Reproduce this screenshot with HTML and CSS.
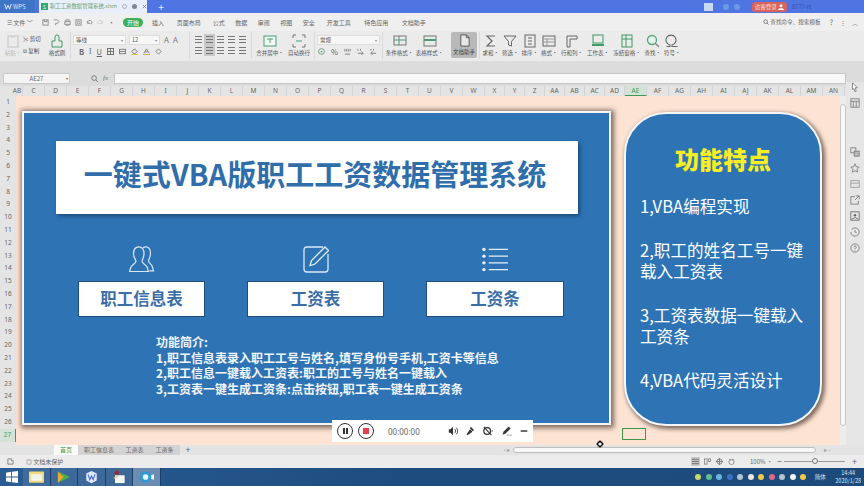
FILE: index.html
```html
<!DOCTYPE html>
<html lang="zh-CN">
<head>
<meta charset="utf-8">
<title>WPS</title>
<link rel="stylesheet" href="styles.css">
</head>
<body>
<div class="app">
  <header class="titlebar">
    <div class="wps-tab"><svg class="wps-logo" viewBox="0 0 12 10"><path d="M1 1l2.500 8L6 3l2.500 6L11 1" fill="none" stroke="#dfe8fa" stroke-width="1.500"/></svg>WPS</div>
    <div class="doc-tab"><span class="doc-icon">S</span><span class="doc-name">职工工资数据管理系统.xlsm</span><span class="doc-x"><i class="dx-a"></i><i class="dx-b"></i><svg viewBox="0 0 6 6"><path d="M1 1l4 4M5 1L1 5" stroke="#7b8798"/></svg></span></div>
    <div class="new-tab">+</div>
    <div class="title-right">
      <span class="t-box"></span><span class="t-dot"></span><span class="t-dot"></span>
      <span class="login">访客登录 <svg viewBox="0 0 8 8" class="login-i"><circle cx="4" cy="2.300" r="2" fill="#fff"/><path d="M0 8c0-3 8-3 8 0z" fill="#fff"/></svg></span>
      <span class="user">877?-rc</span>
    </div>
  </header>

  <nav class="menubar">
    <span class="m-file">☰ 文件 ﹀</span>
    <span class="m-quick">
      <svg viewBox="0 0 8 8"><rect x="1" y="1" width="6" height="6" fill="none" stroke="#888"/><path d="M2.500 1v2h3V1" fill="none" stroke="#888"/></svg>
      <svg viewBox="0 0 8 8"><path d="M1 1h4l2 2-2 2H3v2" fill="none" stroke="#888"/></svg>
      <svg viewBox="0 0 8 8"><rect x="1" y="3" width="6" height="3" fill="none" stroke="#888"/><path d="M2 3V1h4v2M2 6v1h4V6" fill="none" stroke="#888"/></svg>
      <svg viewBox="0 0 8 8"><rect x="1" y="1" width="6" height="6" fill="none" stroke="#888"/><circle cx="4" cy="4" r="1.500" fill="none" stroke="#888"/></svg>
      <svg viewBox="0 0 8 8"><path d="M2 5a2.500 2.500 0 114 1M2 2v3h3" fill="none" stroke="#888"/></svg>
      <svg viewBox="0 0 8 8"><path d="M6 5a2.500 2.500 0 10-4 1M6 2v3H3" fill="none" stroke="#ccc"/></svg>
      <svg viewBox="0 0 8 8"><circle cx="4" cy="4" r="1" fill="#888"/></svg>
    </span>
    <span class="m-start">开始</span>
    <span class="m-i w1">插入</span><span class="m-i w2">页面布局</span><span class="m-i w3">公式</span><span class="m-i w3">数据</span><span class="m-i w3">审阅</span><span class="m-i w3">视图</span><span class="m-i w3">安全</span><span class="m-i w2">开发工具</span><span class="m-i w2">特色应用</span><span class="m-i w2">文档助手</span>
    <span class="m-search">
      <svg viewBox="0 0 8 8"><circle cx="3.500" cy="3.500" r="2.500" fill="none" stroke="#666"/><path d="M5.500 5.500L7.500 7.500" stroke="#666"/></svg>
      <span class="ms-text">查找命令、搜索模板</span><span class="ms-q">?</span><span class="ms-d">⋮</span><span class="ms-u">︿</span>
    </span>
  </nav>

  <section class="ribbon">
    <div class="r-big paste w-a"><svg viewBox="0 0 14 14"><rect x="2" y="2" width="10" height="11" fill="none" stroke="#c4c4c4"/><rect x="5" y="1" width="4" height="3" fill="#d8d8d8"/></svg><span class="muted">粘贴·</span></div>
    <div class="r-two w-b"><span>✂ 剪切</span><span>⧉ 复制</span></div>
    <div class="r-big w-c"><svg viewBox="0 0 14 14"><path d="M5 7V3a2 2 0 014 0v4h3v6H2V7z" fill="none" stroke="#3f9a68"/></svg><span>格式刷</span></div>
    <i class="sep s0"></i>
    <div class="r-font">
      <div class="row"><span class="box f1">等线<b>▾</b></span><span class="box f2">12<b>▾</b></span><span class="ag">A</span><span class="ag">A</span></div>
      <div class="row tools"><b>B</b><em>I</em><u>U</u>
        <svg viewBox="0 0 8 8"><rect x=".5" y=".5" width="7" height="7" fill="none" stroke="#666"/><path d="M4 0v8M0 4h8" stroke="#666"/></svg>
        <svg viewBox="0 0 8 8"><rect x=".5" y="1.500" width="7" height="5" fill="none" stroke="#777"/><path d="M.5 4h7" stroke="#777"/></svg>
        <svg viewBox="0 0 8 8"><path d="M4 1l3 3-3 3-3-3z" fill="none" stroke="#666"/><path d="M0 7.500h8" stroke="#d6c12b"/></svg>
        <svg viewBox="0 0 8 8"><path d="M1 6l3-5 3 5M2.500 4.500h3" fill="none" stroke="#777"/><path d="M0 7.500h8" stroke="#c8a81e"/></svg>
        <svg viewBox="0 0 8 8"><path d="M4 1l3 3-3 3-3-3z" fill="none" stroke="#777"/></svg>
      </div>
    </div>
    <i class="sep s1"></i>
    <div class="r-align">
      <span><i class="ln"></i></span><span class="on"><i class="ln"></i></span><span><i class="ln"></i></span><span><i class="ln"></i></span><span><i class="ln"></i></span>
      <span><i class="ln"></i></span><span class="on"><i class="ln"></i></span><span><i class="ln"></i></span><span><i class="ln"></i></span><span><i class="ln"></i></span>
    </div>
    <i class="sep s2"></i>
    <div class="r-big w-d"><svg viewBox="0 0 14 14"><rect x="1" y="2" width="12" height="10" fill="#f3faf6" stroke="#4b9c72"/><path d="M4 5h6M7 5v4" stroke="#4b9c72"/></svg><span>合并居中·</span></div>
    <div class="r-big w-e"><svg viewBox="0 0 14 14"><path d="M1 4V1h3M10 1h3v3M13 10v3h-3M4 13H1v-3" fill="none" stroke="#777"/><path d="M4 7h6" stroke="#4b9c72"/></svg><span>自动换行</span></div>
    <i class="sep s3"></i>
    <div class="r-num">
      <div class="row"><span class="box f3">常规<b>▾</b></span></div>
      <div class="row tools num">
        <svg viewBox="0 0 8 8"><circle cx="4" cy="4" r="3.300" fill="none" stroke="#5a9c78"/><circle cx="4" cy="4" r="1" fill="#5a9c78"/></svg>
        <span>%</span>
        <svg viewBox="0 0 8 8"><path d="M1 1v3M3 1v3M5 1v3M7 1v3M1 7h6" stroke="#777"/></svg>
        <svg viewBox="0 0 8 8"><path d="M1 1v2M4 1v2M1 6h6M5 4l2 2-2 2" fill="none" stroke="#777"/></svg>
        <svg viewBox="0 0 8 8"><path d="M1 1v2M4 1v2M7 6H1M3 4L1 6l2 2" fill="none" stroke="#777"/></svg>
      </div>
    </div>
    <i class="sep s4"></i>
    <div class="r-big w-f"><svg viewBox="0 0 14 14"><rect x="1" y="2" width="12" height="9" fill="none" stroke="#777"/><path d="M1 6h12M6 2v9" stroke="#4b9c72"/></svg><span>条件格式·</span></div>
    <div class="r-big w-g"><svg viewBox="0 0 14 14"><rect x="1" y="2" width="12" height="10" fill="none" stroke="#777"/><path d="M1 6h12" stroke="#4b9c72" stroke-width="2"/></svg><span>表格样式·</span></div>
    <div class="r-big helper"><svg viewBox="0 0 14 14"><path d="M3 1h6l3 3v9H3z" fill="#e8e8e8" stroke="#555"/><path d="M9 1v3h3" fill="none" stroke="#555"/></svg><span>文档助手</span></div>
    <i class="sep s5"></i>
    <div class="r-big w-h"><svg viewBox="0 0 14 14"><path d="M11 2H3l5 5-5 5h8" fill="none" stroke="#666" stroke-width="1.200"/></svg><span>求和·</span></div>
    <div class="r-big w-h"><svg viewBox="0 0 14 14"><path d="M1 2h12L8.500 7.500V12l-3-1V7.500z" fill="none" stroke="#666"/></svg><span>筛选·</span></div>
    <div class="r-big w-h"><svg viewBox="0 0 14 14"><rect x="2" y="1" width="10" height="12" fill="none" stroke="#666"/><path d="M5 4h4M5 7h4M5 10h4" stroke="#666"/></svg><span>排序·</span></div>
    <div class="r-big w-h"><svg viewBox="0 0 14 14"><rect x="1" y="2" width="12" height="10" fill="none" stroke="#666"/><path d="M1 5h12M1 8h12M5 5v7" stroke="#999"/></svg><span>格式·</span></div>
    <div class="r-big w-i"><svg viewBox="0 0 14 14"><path d="M2 13V2h10v3H5v8z" fill="none" stroke="#666"/></svg><span>行和列·</span></div>
    <div class="r-big w-i"><svg viewBox="0 0 14 14"><rect x="2" y="1" width="10" height="8" fill="none" stroke="#3f9a68"/><path d="M1 11h12" stroke="#3f9a68" stroke-width="2"/></svg><span>工作表·</span></div>
    <div class="r-big w-j"><svg viewBox="0 0 14 14"><rect x="2" y="1" width="10" height="12" fill="none" stroke="#3f9a68"/><path d="M2 5h10M6 1v12" stroke="#3f9a68"/></svg><span>冻结窗格·</span></div>
    <div class="r-big w-h"><svg viewBox="0 0 14 14"><circle cx="6" cy="6" r="4.500" fill="#e6f3ec" stroke="#56a57d" stroke-width="1.300"/><path d="M9 9l4 4" stroke="#888" stroke-width="1.500"/></svg><span>查找·</span></div>
    <div class="r-big w-h"><svg viewBox="0 0 14 14"><path d="M1.500 12.500h3.500v-1.500A5 5 0 117 11v1.500h5.500" fill="none" stroke="#666" stroke-width="1.100"/></svg><span>符号·</span></div>
  </section>

  <section class="formula">
    <span class="namebox">AE27<b>▾</b></span>
    <span class="fx"><svg viewBox="0 0 8 8"><circle cx="3.500" cy="3.500" r="2.700" fill="none" stroke="#777"/><path d="M5.500 5.500L8 8" stroke="#777"/></svg><em>fx</em></span>
    <span class="input"></span>
  </section>

  <div class="columns">
    <span class="col c0">AB</span><span class="col">C</span><span class="col">D</span><span class="col">E</span><span class="col">F</span><span class="col">G</span><span class="col">H</span><span class="col">I</span><span class="col">J</span><span class="col">K</span><span class="col">L</span><span class="col">M</span><span class="col">N</span><span class="col">O</span><span class="col">P</span><span class="col">Q</span><span class="col">R</span><span class="col">S</span><span class="col">T</span><span class="col">U</span><span class="col">V</span><span class="col">W</span><span class="col n">X</span><span class="col n">Y</span><span class="col n">Z</span><span class="col n">AA</span><span class="col n">AB</span><span class="col n">AC</span><span class="col n">AD</span><span class="col sel">AE</span><span class="col">AF</span><span class="col">AG</span><span class="col">AH</span><span class="col">AI</span><span class="col">AJ</span><span class="col">AK</span><span class="col">AL</span><span class="col">AM</span><span class="col">AN</span>
  </div>

  <main class="work">
    <div class="rows">
      <span>1</span><span>2</span><span>3</span><span>4</span><span>5</span><span>6</span><span>7</span><span>8</span><span>9</span><span>10</span><span>11</span><span>12</span><span>13</span><span>14</span><span>15</span><span>16</span><span>17</span><span>18</span><span>19</span><span>20</span><span>21</span><span>22</span><span>23</span><span>24</span><span>25</span><span>26</span><span class="cur">27</span><span>28</span>
    </div>
    <div class="sheet">
      <div class="panel">
        <h1 class="title">一键式VBA版职工工资数据管理系统</h1>
        <div class="actions">
          <div class="action a1">
            <svg class="ico" viewBox="0 0 26 27"><path d="M9.700.8c3.400 0 5.300 3 5.300 7 0 3.500-1.500 5.500-2 7.500 0 2 3 3 5 5.500l1.500 4.700H.5L2 20.800c2-2.500 5-3.500 5-5.500-.5-2-2.500-4-2.500-7.500 0-4 1.800-7 5.200-7z" fill="none" stroke="#d9e8f7" stroke-width="1.200"/><path d="M14 1.800c.8-.7 1.800-1 2.700-1 3.200 0 4.800 3 4.800 6.500 0 3.500-1.500 5.500-2 7.500 0 1.800 1.800 2.800 3.500 5l1.500 5h-4" fill="none" stroke="#d9e8f7" stroke-width="1.200"/></svg>
            <div class="btn">职工信息表</div>
          </div>
          <div class="action a2">
            <svg class="ico" viewBox="0 0 26 27"><path d="M20 1H4a3 3 0 00-3 3v19a3 3 0 003 3h18a3 3 0 003-3V8" fill="none" stroke="#d9e8f7" stroke-width="1.300"/><path d="M22 1l3.500 3.500L12 18l-5 1.500L8.500 14.500z" fill="none" stroke="#e4eff9" stroke-width="1.300"/></svg>
            <div class="btn">工资表</div>
          </div>
          <div class="action a3">
            <svg class="ico" viewBox="0 0 27 27"><g fill="#e4eff9"><circle cx="2" cy="3" r="1.800"/><circle cx="2" cy="10" r="1.800"/><circle cx="2" cy="17" r="1.800"/><circle cx="2" cy="24" r="1.800"/></g><path d="M7 3h20M7 10h20M7 17h20M7 24h20" stroke="#e4eff9" stroke-width="1.200"/></svg>
            <div class="btn">工资条</div>
          </div>
        </div>
        <div class="intro">
          <p>功能简介:</p>
          <p>1,职工信息表录入职工工号与姓名,填写身份号手机,工资卡等信息</p>
          <p>2,职工信息一键载入工资表:职工的工号与姓名一键载入</p>
          <p>3,工资表一键生成工资条:点击按钮,职工表一键生成工资条</p>
        </div>
      </div>
      <aside class="pill">
        <h2>功能特点</h2>
        <p>1,VBA编程实现</p>
        <p>2,职工的姓名工号一键载入工资表</p>
        <p>3,工资表数据一键载入工资条</p>
        <p>4,VBA代码灵活设计</p>
      </aside>
      <div class="cell"></div>
    </div>
    <div class="vscroll"><span class="thumb"></span></div>
    <div class="side">
      <svg viewBox="0 0 12 12"><path d="M3 1l6 6H6l1.500 4L6 11.500 4.500 8 3 9z" fill="#fff" stroke="#777"/></svg>
      <svg viewBox="0 0 12 12"><rect x="1" y="1" width="10" height="10" fill="none" stroke="#777"/><path d="M1 4h10M4 4v7M7.500 4v7" stroke="#777"/></svg>
      <i class="gap"></i>
      <svg viewBox="0 0 12 12"><rect x="1" y="1" width="6" height="6" fill="none" stroke="#777"/><rect x="5" y="5" width="6" height="6" fill="#bbb" stroke="#777"/></svg>
      <svg viewBox="0 0 12 12"><path d="M6 1l1.500 3.500 3.500.5-2.500 2.500.6 3.500L6 9.300 2.900 11l.6-3.500L1 5l3.500-.5z" fill="none" stroke="#777"/></svg>
      <svg viewBox="0 0 12 12"><rect x="1" y="2" width="10" height="8" fill="none" stroke="#999"/><path d="M1 5h10" stroke="#999"/></svg>
      <svg viewBox="0 0 12 12"><path d="M6 2H1v9h9V7M7 1h4v4M11 1L6 6" fill="none" stroke="#777"/></svg>
      <svg viewBox="0 0 12 12"><rect x="1" y="1" width="10" height="10" fill="none" stroke="#666"/><circle cx="6" cy="5" r="1.500" fill="#666"/><path d="M2 10l3-2h2l3 2" stroke="#666" fill="none"/></svg>
      <svg viewBox="0 0 12 12"><path d="M2 3a5 5 0 11-1 3M6 3.500V6l2 1" fill="none" stroke="#777"/></svg>
      <svg viewBox="0 0 12 12"><circle cx="6" cy="6" r="5" fill="none" stroke="#777"/><path d="M4.500 5a1.500 1.500 0 113 0c0 1-1.500 1-1.500 2.500M6 9v.8" fill="none" stroke="#777"/></svg>
    </div>
    <div class="recorder">
      <span class="rc"><i class="bars"></i></span>
      <span class="rc"><i class="stop"></i></span>
      <span class="time">00:00:00</span>
      <span class="rtools">
        <svg viewBox="0 0 12 12"><path d="M1 4h2l3-3v10L3 8H1z" fill="#333"/><path d="M8 3.500c1.500 1.500 1.500 3.500 0 5M10 2c2 2 2 6 0 8" fill="none" stroke="#333"/></svg>
        <svg viewBox="0 0 12 12"><path d="M7 1l4 4-2 1-3-3zM6 4L2 10l1 1 6-4" fill="#333"/></svg>
        <svg viewBox="0 0 12 12"><circle cx="5" cy="6" r="4" fill="none" stroke="#333" stroke-width="1.500"/><path d="M1 1l9 10" stroke="#333" stroke-width="1.300"/><circle cx="11" cy="6" r=".8" fill="#333"/></svg>
        <svg viewBox="0 0 12 12"><path d="M8 1l2 2-6 6-3 1 1-3zM6 11h6" fill="#333" stroke="#333" stroke-width=".5"/></svg>
        <svg viewBox="0 0 12 12"><path d="M2 6h8" stroke="#222" stroke-width="1.600"/></svg>
      </span>
    </div>
    <svg class="cursor" viewBox="0 0 10 10"><path d="M5 0l1.500 2H8v1.500L10 5 8 6.500V8H6.500L5 10 3.500 8H2V6.500L0 5l2-1.500V2h1.500z" fill="#111"/><circle cx="5" cy="5" r="2" fill="#fff"/></svg>
  </main>

  <div class="tabsbar">
    <span class="tab act">首页</span><span class="tab t2">职工信息表</span><span class="tab t3">工资表</span><span class="tab t3">工资条</span><span class="plus">+</span>
    <span class="hleft">‹ ▸</span>
    <span class="hscroll"></span>
    <span class="hright">▸ ›</span>
  </div>

  <footer class="status">
    <span class="s-a"><svg viewBox="0 0 8 8"><path d="M1 1h4v2h2v4H1z" fill="none" stroke="#777"/></svg></span><span class="s-b">◎ 文档未保护</span>
    <span class="views">
      <svg class="v-on" viewBox="0 0 8 8"><path d="M0 1.500h8M0 4h8M0 6.500h8" stroke="#666"/></svg>
      <svg viewBox="0 0 8 8"><rect x=".5" y="1" width="3" height="6" fill="none" stroke="#888"/><rect x="5" y="1" width="2.500" height="3" fill="none" stroke="#888"/></svg>
      <svg viewBox="0 0 8 8"><circle cx="4" cy="4" r="3" fill="none" stroke="#777"/><path d="M4 0v8M0 4h8" stroke="#777"/></svg>
      <svg viewBox="0 0 8 8"><circle cx="4" cy="4.500" r="3" fill="none" stroke="#888"/><path d="M2 1l1 2M6 1L5 3" stroke="#888"/></svg>
    </span>
    <span class="zoomtxt">100% ·</span><span class="zm">−</span><span class="slider"><i></i></span><span class="zp">+</span>
  </footer>

  <div class="taskbar">
    <span class="start"><svg viewBox="0 0 14 14"><path d="M0 2l6-1v5.500H0zM7 1l7-1v6.500H7zM0 7.500h6V13l-6-1zM7 7.500h7V14l-7-1z" fill="#fff"/></svg></span>
    <span class="task"><svg viewBox="0 0 16 14"><rect y="1" width="16" height="12" rx="1" fill="#f2d97a"/><rect x="2" y="4" width="12" height="7" fill="#eef5e9"/></svg></span>
    <span class="task"><svg viewBox="0 0 16 14"><path d="M2 1l13 6-13 6z" fill="#4fb04a"/><path d="M2 1l6 6-6 6z" fill="#f0a92a"/></svg></span>
    <span class="task"><svg viewBox="0 0 16 16"><path d="M8 1l6 3v8l-6 3-6-3V4z" fill="#dfe9fb"/><path d="M4 5l2 6 2-4 2 4 2-6" fill="none" stroke="#4a6fd0" stroke-width="1.300"/></svg></span>
    <span class="task"><svg viewBox="0 0 16 16"><rect x="4" y="6" width="11" height="9" fill="#f5f5f5"/><circle cx="6" cy="3" r="2.500" fill="#a3242f"/><path d="M2 9l5-3 1 1-5 3z" fill="#e0c060"/></svg></span>
    <span class="task cur-task"><svg viewBox="0 0 16 14"><circle cx="7" cy="7" r="6" fill="#2a9ad8"/><circle cx="7" cy="7" r="3" fill="#e8f6fd"/><path d="M13 5l3-1v6l-3-1z" fill="#e8f6fd"/></svg></span>
    <span class="tray">
      <i class="d1"></i><i class="d2"></i><i class="d3"></i><i class="d4"></i><i class="d5"></i><i class="d6"></i><i class="d7"></i><i class="d8"></i><i class="d5"></i><i class="d9"></i><i class="d7"></i>
      <span class="ime">简体</span>
      <span class="clock">14:44<br>2020/1/28</span>
    </span>
  </div>
</div>
</body>
</html>
```

FILE: styles.css
```css
* { box-sizing: border-box; margin: 0; padding: 0; }
html, body { width: 864px; height: 486px; overflow: hidden; }
body { font-family: "Noto Sans CJK SC", "Noto Sans", sans-serif; color: #555; background: #eee; }
i, em { font-style: normal; }
.app { width: 864px; height: 486px; display: flex; flex-direction: column; }

/* title bar */
.titlebar { height: 13px; flex: none; background: #4f75e3; display: flex; align-items: stretch; font-size: 6px; line-height: 13px; color: #dfe8fa; }
.wps-tab { width: 35px; background: #3f74c6; display: flex; align-items: center; gap: 1px; padding-left: 4px; }
.wps-logo { width: 8px; height: 7px; }
.doc-tab { width: 108px; margin-left: 4px; background: #e8eefb; display: flex; align-items: center; padding-left: 2px; color: #6aa56f; }
.doc-icon { width: 7px; height: 7px; background: #2fa874; color: #fff; font-size: 5px; line-height: 7px; text-align: center; margin-right: 2px; }
.doc-name { width: 70px; font-size: 5.400px; white-space: nowrap; }
.doc-x { display: flex; align-items: center; gap: 5px; margin-left: 3px; }
.doc-x svg { width: 5px; height: 5px; }
.dx-a { width: 5px; height: 5px; border: 1px solid #a6afbd; border-radius: 50%; }
.dx-b { width: 5px; height: 5px; background: #7b8798; border-radius: 50%; }
.new-tab { width: 28px; text-align: center; font-size: 10px; color: #e6edfb; }
.title-right { margin-left: auto; display: flex; align-items: center; padding-right: 52px; }
.t-box { width: 9px; height: 8px; background: #c9daf5; margin-right: 10px; }
.t-dot { width: 6px; height: 6px; border-radius: 50%; background: #6a9be6; margin-right: 5px; }
.login { width: 35px; height: 10px; margin-left: 7px; background: #d9635c; border-radius: 3px; color: #fbe3e0; font-size: 5.500px; line-height: 10px; text-align: center; display: flex; align-items: center; justify-content: center; gap: 1px; white-space: nowrap; }
.login-i { width: 6px; height: 6px; }
.user { color: #3151b0; margin-left: 5px; }

/* menu */
.menubar { height: 18px; flex: none; background: #efefef; display: flex; align-items: center; font-size: 6px; color: #666; white-space: nowrap; }
.m-file { width: 42px; padding-left: 7px; }
.m-quick { width: 81px; display: flex; gap: 4px; }
.m-quick svg { width: 7px; height: 7px; flex: none; }
.m-start { width: 20px; height: 9px; line-height: 9px; border-radius: 5px; background: #3cae5c; color: #fff; text-align: center; margin-right: 3px; }
.m-i { text-align: center; }
.m-i.w1 { width: 24px; }
.m-i.w2 { width: 37.500px; }
.m-i.w3 { width: 22.500px; }
.m-search { margin-left: auto; padding-right: 6px; display: flex; align-items: center; color: #666; }
.m-search svg { width: 6px; height: 6px; margin-right: 1px; }
.ms-text { font-size: 5.600px; }
.ms-q { margin-left: 9px; font-size: 7px; }
.ms-d { margin-left: 7px; }
.ms-u { margin-left: 6px; }

/* ribbon */
.ribbon { height: 31px; flex: none; background: #ebebeb; border-bottom: 1px solid #dedede; display: flex; font-size: 5.500px; color: #555; white-space: nowrap; }
.r-big { display: flex; flex-direction: column; align-items: center; padding-top: 3px; line-height: 8px; flex: none; }
.r-big svg { width: 14px; height: 14px; margin-bottom: 1px; }
.muted { color: #bbb; }
.w-a { width: 23px; padding-left: 3px; }
.w-b { width: 24px; }
.w-c { width: 20px; }
.w-d { width: 30px; }
.w-e { width: 28px; }
.w-f { width: 29px; }
.w-g { width: 31px; }
.w-h { width: 19.500px; }
.w-i { width: 26px; }
.w-j { width: 32px; }
.r-two { display: flex; flex-direction: column; gap: 3px; padding-top: 4px; flex: none; line-height: 9px; }
.sep { width: 1px; height: 27px; margin: 1px 3px 0; background: #dadada; flex: none; }
.s0 { margin-right: 2px; }
.s3 { margin-left: 1px; margin-right: 2px; }
.s4 { margin-left: 2px; margin-right: 2px; }
.s5 { margin-left: 2px; margin-right: 1px; }
.r-font { width: 113px; flex: none; padding-top: 3px; }
.r-num { width: 63px; flex: none; padding-top: 3px; }
.row { display: flex; align-items: center; height: 11px; }
.box { height: 10px; line-height: 9px; background: #f7f7f7; border: 1px solid #ddd; display: flex; justify-content: space-between; padding: 0 2px; }
.box b { font-weight: 400; font-size: 4px; color: #888; }
.f1 { width: 53px; }
.f2 { width: 31px; margin-left: 3px; margin-right: 4px; }
.f3 { width: 63px; }
.ag { width: 9px; font-size: 8px; line-height: 11px; color: #777; }
.tools { margin-top: 1px; gap: 5px; font-size: 7.500px; color: #666; padding-left: 6px; line-height: 11px; }
.tools svg { width: 7px; height: 7px; flex: none; }
.tools em { font-family: "Liberation Serif", serif; }
.num { gap: 6px; padding-left: 1px; }
.r-align { width: 55px; flex: none; display: grid; grid-template-columns: repeat(5, 11px); grid-auto-rows: 11px; padding-top: 3px; }
.r-align span { display: flex; align-items: center; justify-content: center; }
.r-align .on { background: #c9c9c9; }
.ln { width: 7px; height: 7px; background: repeating-linear-gradient(#777 0 1px, transparent 1px 3px); }
.helper { width: 26px; height: 26px; margin: 1px 0 0 6px; background: #b9b9b9; border-radius: 2px; color: #444; padding-top: 2px; }
.helper svg { width: 13px; height: 13px; }

/* formula */
.formula { height: 24px; flex: none; background: #dcdcdc; display: flex; align-items: flex-start; padding: 11px 18px 0 3px; font-size: 6px; }
.namebox { width: 67px; height: 11px; line-height: 9px; background: #f4f4f4; border: 1px solid #c9c9c9; text-align: center; color: #666; display: flex; justify-content: center; position: relative; }
.namebox b { position: absolute; right: 1px; font-weight: 400; font-size: 4px; }
.fx { width: 44px; height: 11px; line-height: 11px; padding-left: 21px; font-size: 7px; color: #777; white-space: nowrap; display: flex; align-items: center; gap: 5px; }
.fx svg { width: 7px; height: 7px; }
.fx em { font-family: "Liberation Serif", serif; font-style: italic; }
.input { flex: 1; height: 11px; background: #f8f8f8; border: 1px solid #c6c6c6; }

/* columns */
.columns { height: 10px; flex: none; display: flex; background: #e4e4e4; padding-left: 12px; font-size: 6.500px; line-height: 10px; color: #666; font-family: "Noto Sans", sans-serif; }
.col { width: 22px; flex: none; text-align: center; border-right: 1px solid #d4d4d4; }
.col.c0 { width: 11px; }
.col.n { width: 20px; }
.col.sel { width: 22px; background: #d4e3d8; color: #3c9a5d; border-bottom: 1px solid #3c9a5d; }

/* work area */
.work { height: 349px; flex: none; display: flex; position: relative; background: #dedede; }
.rows { width: 16px; flex: none; display: flex; flex-direction: column; font-family: "Noto Sans", sans-serif; font-size: 6.500px; background: #e4e4e4; color: #666; overflow: hidden; }
.rows span { height: 12.800px; flex: none; line-height: 12.800px; text-align: center; }
.rows .cur { background: #d4e3d8; color: #3c9a5d; border-right: 1px solid #3c9a5d; }
.sheet { width: 824px; flex: none; background: #fde3d4; position: relative; }
.panel { position: absolute; left: 6px; top: 15px; width: 589px; height: 314px; background: #2e74b5; border: 2px solid #f4f6f8; box-shadow: 1px 1px 5px 2px #7d6a5d; display: flex; flex-direction: column; align-items: center; }
.title { width: 522px; height: 73px; flex: none; margin-top: 28px; margin-left: 1px; padding-right: 4px; background: #fff; box-shadow: 2px 2px 4px #1c4a78; color: #2f6eaa; font-size: 29px; font-weight: 700; line-height: 64px; text-align: center; white-space: nowrap; }
.actions { display: flex; margin-top: 32px; align-self: flex-start; margin-left: 54px; }
.action { display: flex; flex-direction: column; align-items: center; }
.a1 { width: 127px; }
.a2 { width: 137px; margin-left: 42px; }
.a3 { width: 138px; margin-left: 42px; }
.ico { width: 26px; height: 27px; margin-bottom: 8px; }
.btn { width: 100%; height: 36px; background: #fff; border: 1px solid #1f4e7c; color: #3a6ea6; font-size: 16.500px; font-weight: 700; line-height: 32px; text-align: center; }
.intro { align-self: flex-start; margin-left: 132px; margin-top: 17px; color: #f2f6fa; font-size: 12px; font-weight: 700; line-height: 15.700px; white-space: nowrap; }
.pill { position: absolute; left: 608px; top: 16px; width: 198px; height: 314px; border-radius: 42px; background: #2e74b5; border: 2px solid #f4f6f8; box-shadow: 2px 2px 4px 1px #7d6a5d; color: #fff; padding: 0 14px; font-size: 16.600px; line-height: 21.500px; }
.pill h2 { color: #f8ee26; font-size: 24px; line-height: 34px; font-weight: 900; text-align: center; margin-top: 28px; margin-bottom: 20px; }
.pill p { margin-bottom: 22px; }
.cell { position: absolute; left: 606px; top: 332px; width: 24px; height: 12px; border: 1px solid #3f9a48; }
.vscroll { width: 6px; flex: none; background: #ececec; padding-top: 8px; }
.thumb { display: block; width: 6px; height: 322px; background: #f8f8f8; border: 1px solid #c8c8c8; border-radius: 3px; }
.side { flex: 1; background: #e6e6e6; display: flex; flex-direction: column; align-items: center; gap: 6px; margin-top: -14px; height: 363px; position: relative; }
.side svg { width: 10px; height: 10px; flex: none; }
.gap { height: 27px; flex: none; }
.recorder { position: absolute; left: 332px; top: 324px; width: 201px; height: 22px; background: #fff; display: flex; align-items: center; padding-left: 5px; gap: 5px; }
.rc { width: 16px; height: 16px; border: 1px solid #333; border-radius: 50%; display: flex; align-items: center; justify-content: center; }
.bars { width: 5px; height: 6px; border-left: 2px solid #333; border-right: 2px solid #333; }
.stop { width: 6px; height: 6px; background: #e6404c; }
.time { width: 54px; margin-left: 9px; font-size: 8px; color: #666; font-family: "Noto Sans", sans-serif; }
.rtools { display: flex; gap: 7px; margin-left: 1px; }
.rtools svg { width: 10px; height: 10px; flex: none; }
.rtools svg:nth-child(4) { margin-left: 2px; }
.rtools svg:nth-child(3) { margin-left: 1px; }
.cursor { position: absolute; left: 596px; top: 344px; width: 8px; height: 8px; }

/* tabs */
.tabsbar { height: 10px; flex: none; background: #e4e4e4; display: flex; align-items: stretch; padding-left: 54px; font-size: 6px; line-height: 10px; color: #666; white-space: nowrap; }
.tab { text-align: center; background: #d3d3d3; }
.tab.act { width: 24px; background: #fafafa; color: #3e9a5a; }
.t2 { width: 42px; }
.t3 { width: 30px; padding-right: 1px; }
.plus { width: 16px; text-align: center; font-size: 9px; }
.hleft { width: 317px; text-align: right; padding-right: 3px; color: #999; }
.hscroll { width: 303px; height: 6px; margin-top: 2px; background: #f7f7f7; border: 1px solid #bdbdbd; border-radius: 3px; }
.hright { margin-left: 8px; color: #999; }

/* status */
.status { height: 13px; flex: none; background: #ececec; display: flex; align-items: center; font-size: 6px; color: #666; white-space: nowrap; }
.s-a { width: 26px; padding-left: 7px; display: flex; }
.s-a svg { width: 7px; height: 7px; }
.s-b { width: 666px; }
.views { display: flex; align-items: center; gap: 5px; width: 58px; }
.views svg { width: 7px; height: 7px; flex: none; }
.v-on { background: #c9c9c9; outline: 1px solid #c9c9c9; }
.zoomtxt { width: 27px; }
.zm { width: 7px; font-size: 9px; }
.slider { width: 61px; height: 1px; background: #999; position: relative; }
.slider i { position: absolute; left: 28px; top: -3px; width: 6px; height: 6px; border-radius: 50%; border: 1px solid #777; background: #eee; }
.zp { margin-left: 7px; font-size: 9px; }

/* taskbar */
.taskbar { height: 18px; flex: none; background: linear-gradient(100deg, #2b5c93, #1d4d80 45%, #1c4a7a); display: flex; }
.start { width: 23px; display: flex; align-items: center; justify-content: center; }
.start svg { width: 12px; height: 12px; }
.task { width: 27.500px; background: rgba(255,255,255,.1); border-right: 1px solid #1b3f68; display: flex; align-items: center; justify-content: center; }
.task svg { width: 15px; height: 14px; }
.cur-task { background: rgba(255,255,255,.32); }
.tray { margin-left: auto; display: flex; align-items: center; gap: 2.500px; color: #dfe8f3; font-size: 5.500px; padding-right: 3px; }
.tray i { width: 6px; height: 6px; border-radius: 50%; margin-right: 2px; }
.d1 { background: #c9d86a; }
.d2 { background: #5bbf8e; }
.d3 { background: #6ab5dd; }
.d4 { background: #3c6fc9; }
.d5 { background: #b6c3d3; }
.d6 { background: #e8e8e8; }
.d7 { background: #f0c84a; }
.d8 { background: #dd6a8c; }
.d9 { background: #f2f2f2; }
.ime { margin-left: 4px; margin-right: 7px; }
.clock { text-align: center; line-height: 8px; }
```
